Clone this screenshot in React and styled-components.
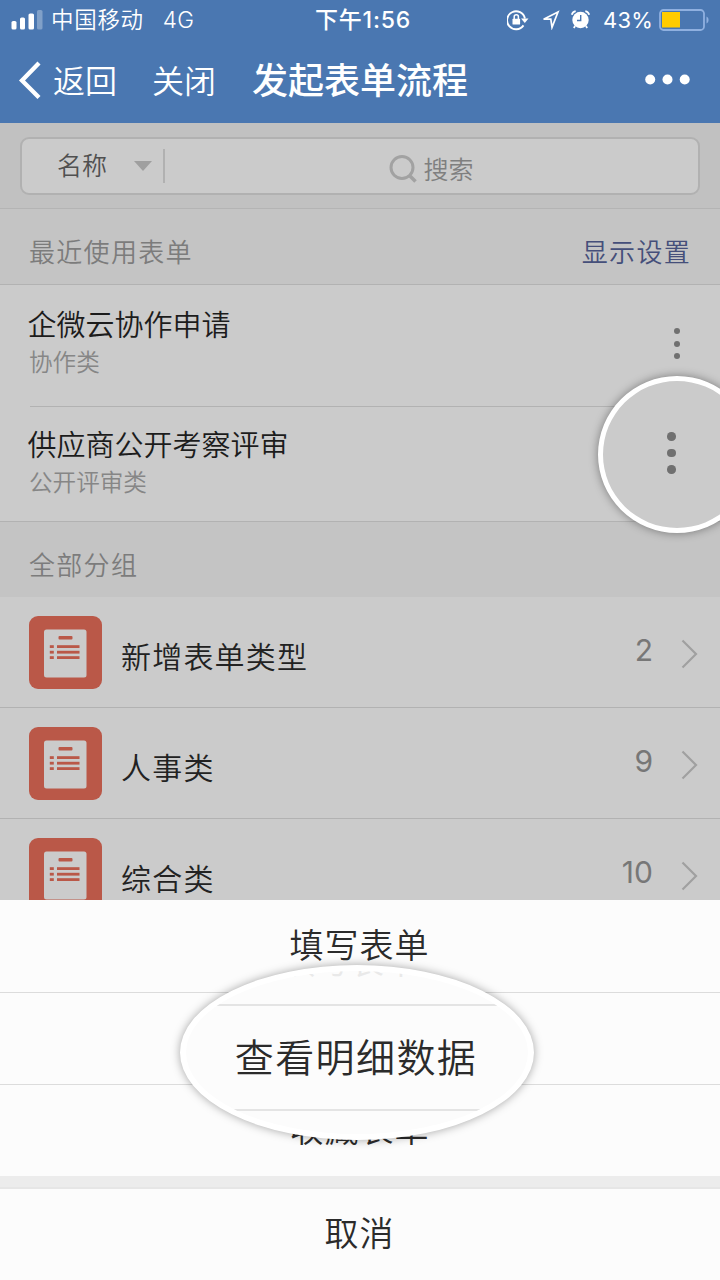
import React from "react";
import styled, { createGlobalStyle } from "styled-components";

const GlobalStyle = createGlobalStyle`
  * {
    box-sizing: border-box;
  }
  body {
    margin: 0;
    font-family: Inter, "Noto Sans CJK SC", sans-serif;
    font-weight: 350;
    background: #cbcbcb;
  }
`;

const Screen = styled.div`
  position: relative;
  display: flex;
  flex-direction: column;
  width: 720px;
  height: 1280px;
  overflow: hidden;
  background: #cbcbcb;
`;

const Header = styled.header`
  height: 123px;
  flex: none;
  background: #4a77b1;
  color: #fff;
`;

const StatusBar = styled.div`
  display: grid;
  grid-template-columns: 1fr auto 1fr;
  align-items: center;
  height: 40px;
  padding: 0 11px;
  font-size: 22px;
  line-height: 40px;
`;

const StatusSide = styled.div`
  display: flex;
  align-items: center;
  justify-content: ${(props) => (props.$end ? "flex-end" : "flex-start")};
  svg {
    flex: none;
  }
`;

const Carrier = styled.span`
  margin-left: 8px;
  font-size: 22.5px;
  letter-spacing: 0.7px;
`;

const Network = styled.span`
  margin-left: 19px;
  font-size: 22.5px;
  letter-spacing: 0.3px;
`;

const Clock = styled.span`
  padding-left: 6px;
  font-size: 23px;
  font-weight: 500;
  letter-spacing: 0.8px;
`;

const StatusIcons = styled.div`
  display: flex;
  align-items: center;
  gap: 10px;
  padding-bottom: 1px;
`;

const Percent = styled.span`
  margin: 0 6px 0 12px;
  font-size: 22px;
  font-weight: 400;
  letter-spacing: 0.2px;
`;

const NavBar = styled.nav`
  display: flex;
  align-items: center;
  height: 80px;
  padding: 0 29px 0 17px;
`;

const NavLink = styled.span`
  margin-left: ${(props) => props.$gap}px;
  padding-top: 3px;
  font-size: 32px;
  line-height: 80px;
`;

const NavTitle = styled.h1`
  flex: 1;
  margin: 0 0 0 36px;
  padding-top: 2px;
  font-size: 36px;
  font-weight: 500;
  line-height: 80px;
`;

const SearchArea = styled.div`
  flex: none;
  height: 86px;
  padding: 14px 20px 0;
  background: #c1c1c1;
  border-bottom: 1px solid #b4b4b4;
`;

const SearchBox = styled.div`
  display: flex;
  align-items: center;
  height: 58px;
  border: 2px solid #b1b1b1;
  border-radius: 9px;
  background: #cbcbcb;
`;

const Filter = styled.div`
  display: flex;
  align-items: center;
  justify-content: space-between;
  width: 143px;
  height: 34px;
  padding: 0 11px 0 35px;
  border-right: 2px solid #b1b1b1;
  color: #505050;
  font-size: 25px;
  line-height: 34px;
`;

const SearchHint = styled.div`
  flex: 1;
  display: flex;
  align-items: center;
  justify-content: center;
  gap: 6px;
  padding: 7px 0 0;
  color: #7f7f7f;
  font-size: 25px;
  line-height: 36px;
  svg {
    margin-bottom: 2px;
  }
`;

const SectionHead = styled.div`
  flex: none;
  display: flex;
  justify-content: space-between;
  height: ${(props) => props.$height}px;
  padding: 7px 29px 0;
  background: #c4c4c4;
  border-bottom: ${(props) => (props.$line ? "1px solid #b2b2b2" : "none")};
  color: #7c7c7c;
  font-size: 26px;
  letter-spacing: 1.3px;
  line-height: 74px;
`;

const SettingsLink = styled.a`
  color: #454f7a;
`;

const FormRow = styled.div`
  flex: none;
  display: flex;
  justify-content: space-between;
  height: ${(props) => props.$height}px;
  margin-left: ${(props) => (props.$inset ? 30 : 0)}px;
  padding: ${(props) => (props.$inset ? "21px 0 0 0" : "19px 0 0 30px")};
  border-bottom: 1px solid #b2b2b2;
`;

const FormName = styled.div`
  margin-left: -2.5px;
  color: #1c1c1c;
  font-size: 29px;
  line-height: 40px;
`;

const FormKind = styled.div`
  margin-left: -1px;
  color: #868686;
  font-size: 23.6px;
  line-height: 34px;
`;

const MoreButton = styled.div`
  display: flex;
  flex-direction: column;
  align-items: center;
  gap: ${(props) => (props.$large ? 8 : 6.5)}px;
  span {
    width: ${(props) => (props.$large ? 8.5 : 6)}px;
    height: ${(props) => (props.$large ? 8.5 : 6)}px;
    border-radius: 50%;
    background: #707070;
  }
`;

const RowMore = styled(MoreButton)`
  margin: 22px 40px 0 0;
`;

const GroupRow = styled.div`
  flex: none;
  display: flex;
  align-items: flex-start;
  height: 111.2px;
  padding: 19px 22px 0 29px;
  border-bottom: 1px solid #b2b2b2;
`;

const GroupName = styled.div`
  flex: 1;
  margin-left: 19px;
  padding-top: 19px;
  color: #222;
  font-size: 30px;
  letter-spacing: 1.2px;
  line-height: 44px;
`;

const GroupCount = styled.div`
  margin-right: 28px;
  padding-top: 12px;
  color: #777;
  font-size: 30px;
  font-weight: 400;
  line-height: 44px;
`;

const Chevron = styled.svg`
  margin-top: 23px;
`;

const Sheet = styled.div`
  position: absolute;
  left: 0;
  right: 0;
  bottom: 0;
  height: 380px;
  background: #fcfcfc;
  color: #2b2b2b;
`;

const SheetItem = styled.div`
  height: ${(props) => props.$height}px;
  padding-right: 1px;
  border-bottom: ${(props) => (props.$last ? "none" : "1px solid #dcdcdc")};
  font-size: 34px;
  letter-spacing: 1px;
  line-height: ${(props) => props.$height - 1}px;
  text-align: center;
`;

const SheetGap = styled.div`
  height: 13px;
  background: #ececec;
  border-bottom: 2px solid #e6e6e6;
`;

const RoundLens = styled.div`
  position: absolute;
  top: 376px;
  left: 598px;
  display: flex;
  align-items: center;
  justify-content: center;
  width: 158px;
  height: 157px;
  padding: 0 11px 3px 0;
  border: 5px solid #fff;
  border-radius: 50%;
  background: #cbcbcb;
  box-shadow: 0 0 10px rgba(0, 0, 0, 0.4);
`;

const OvalLens = styled.div`
  position: absolute;
  top: 965px;
  left: 180px;
  width: 354px;
  height: 175px;
  overflow: hidden;
  border: 6px solid #fff;
  border-radius: 50%;
  background: #fcfcfc;
  box-shadow: 0 0 10px rgba(0, 0, 0, 0.35);
  color: #2b2b2b;
  text-align: center;
`;

/* only the feet of the row above reach into the lens */
const LensPrevious = styled.div`
  display: flex;
  align-items: flex-end;
  justify-content: center;
  height: 35px;
  padding: 0 14px 23px 0;
  border-bottom: 2px solid #e4e4e4;
  color: #e9e9e9;
  font-size: 34px;
  line-height: 38px;
`;

const LensItem = styled.div`
  height: 105px;
  padding: 2px 2px 0 0;
  border-bottom: 2px solid #e4e4e4;
  font-size: 39px;
  letter-spacing: 1.4px;
  line-height: 100px;
`;

const forms = [
  { name: "企微云协作申请", kind: "协作类", height: 122 },
  { name: "供应商公开考察评审", kind: "公开评审类", height: 115 },
];

const groups = [
  { name: "新增表单类型", count: 2 },
  { name: "人事类", count: 9 },
  { name: "综合类", count: 10 },
];

function SignalIcon() {
  return (
    <svg width="32" height="20" viewBox="0 0 32 20" fill="#fff">
      <rect x="0.5" y="11" width="5" height="8.5" rx="1.6" />
      <rect x="9" y="7.5" width="5" height="12" rx="1.6" />
      <rect x="17.5" y="3.5" width="5.5" height="16" rx="1.6" />
      <rect x="26" y="0" width="5.5" height="19.5" rx="1.6" opacity="0.3" />
    </svg>
  );
}

function RotationLockIcon() {
  return (
    <svg width="24" height="22" viewBox="0 0 24 22" fill="none" stroke="#fff">
      <path d="M16.5 16.4A9 9 0 1 1 17.9 9.5" strokeWidth="1.9" />
      <path d="M14 9.5h7.500l-3.700 4.500z" fill="#fff" stroke="none" />
      <rect x="5.5" y="9.800" width="7.600" height="5.800" rx="0.6" fill="#fff" stroke="none" />
      <path d="M7.200 10V7.800a2.100 2.100 0 0 1 4.200 0V10" strokeWidth="1.5" />
    </svg>
  );
}

function LocationIcon() {
  return (
    <svg width="20" height="20" viewBox="0 0 20 20" fill="none">
      <path d="M17 2 2.600 9.200h7.200l1.200 8.200z" stroke="#fff" strokeWidth="1.7" />
    </svg>
  );
}

function AlarmIcon() {
  return (
    <svg width="20" height="20" viewBox="0 0 20 20" fill="none">
      <circle cx="9.500" cy="10" r="8.200" fill="#fff" />
      <path d="M9.700 5v5.500H6" stroke="#4a77b1" strokeWidth="1.4" />
      <path
        d="M.8 4.800C1.300 3 2.700 1.600 4.700 1.200M18.200 4.800c-.5-1.800-1.900-3.200-3.900-3.600M4.100 16l-1.300 2M14.900 16l1.300 2"
        stroke="#fff"
        strokeWidth="1.8"
      />
    </svg>
  );
}

function BatteryIcon() {
  return (
    <svg width="50" height="22" viewBox="0 0 50 22" fill="none">
      <rect x="1" y="1" width="44" height="20" rx="3.5" stroke="#8fb0e0" strokeWidth="1.8" />
      <rect x="3" y="3" width="18" height="15.5" fill="#fc0" />
      <path d="M47.500 7.500c1.600.8 2 2 2 3.500s-.4 2.700-2 3.500z" fill="#8fb0e0" />
    </svg>
  );
}

function FormIcon() {
  return (
    <svg width="73" height="73" viewBox="0 0 73 73">
      <rect width="73" height="73" rx="9" fill="#ba5848" />
      <rect x="15" y="13.5" width="42.5" height="48" rx="2.5" fill="#cbcbcb" />
      <g fill="#ba5848">
        <rect x="29.5" y="20" width="14" height="3.6" rx="1" />
        {[29.2, 34.8, 40.2].map((y) => (
          <React.Fragment key={y}>
            <rect x="20.8" y={y} width="4" height="2.8" />
            <rect x="28" y={y} width="22.5" height="2.8" />
          </React.Fragment>
        ))}
      </g>
    </svg>
  );
}

export default function App() {
  return (
    <>
      <GlobalStyle />
      <Screen>
        <Header>
          <StatusBar>
            <StatusSide>
              <SignalIcon />
              <Carrier>中国移动</Carrier>
              <Network>4G</Network>
            </StatusSide>
            <Clock>下午1:56</Clock>
            <StatusSide $end>
              <StatusIcons>
                <RotationLockIcon />
                <LocationIcon />
                <AlarmIcon />
              </StatusIcons>
              <Percent>43%</Percent>
              <BatteryIcon />
            </StatusSide>
          </StatusBar>
          <NavBar>
            <svg width="24" height="40" viewBox="0 0 24 40" fill="none">
              <path d="M22 3 5 20.500l17 17" stroke="#fff" strokeWidth="4.3" />
            </svg>
            <NavLink $gap={12}>返回</NavLink>
            <NavLink $gap={35}>关闭</NavLink>
            <NavTitle>发起表单流程</NavTitle>
            <svg width="46" height="12" viewBox="0 0 46 12" fill="#fff">
              <circle cx="5.2" cy="5.5" r="5" />
              <circle cx="22.5" cy="5.5" r="5" />
              <circle cx="39.7" cy="5.5" r="5" />
            </svg>
          </NavBar>
        </Header>

        <SearchArea>
          <SearchBox>
            <Filter>
              名称
              <svg width="18" height="10" viewBox="0 0 18 10">
                <path d="M0 0h18L9 10z" fill="#9f9f9f" />
              </svg>
            </Filter>
            <SearchHint>
              <svg width="28" height="28" viewBox="0 0 28 28" fill="none" stroke="#a2a2a2">
                <circle cx="13" cy="12.5" r="11" strokeWidth="3" />
                <path d="m20.500 20.500 6 6" strokeWidth="3.5" />
              </svg>
              搜索
            </SearchHint>
          </SearchBox>
        </SearchArea>

        <SectionHead $height={76} $line>
          <span>最近使用表单</span>
          <SettingsLink>显示设置</SettingsLink>
        </SectionHead>
        {forms.map((form, i) => (
          <FormRow key={form.name} $height={form.height} $inset={i === 0}>
            <div>
              <FormName>{form.name}</FormName>
              <FormKind>{form.kind}</FormKind>
            </div>
            {i === 0 && (
              <RowMore>
                <span />
                <span />
                <span />
              </RowMore>
            )}
          </FormRow>
        ))}

        <SectionHead $height={75}>
          <span>全部分组</span>
        </SectionHead>
        {groups.map((group) => (
          <GroupRow key={group.name}>
            <FormIcon />
            <GroupName>{group.name}</GroupName>
            <GroupCount>{group.count}</GroupCount>
            <Chevron width="17" height="30" viewBox="0 0 17 30" fill="none">
              <path d="M1.500 1.500 15 15 1.500 28.500" stroke="#a0a0a0" strokeWidth="2.2" />
            </Chevron>
          </GroupRow>
        ))}

        <Sheet>
          <SheetItem $height={93}>填写表单</SheetItem>
          <SheetItem $height={92} />
          <SheetItem $height={91} $last>
            收藏表单
          </SheetItem>
          <SheetGap />
          <SheetItem $height={91} $last>
            取消
          </SheetItem>
        </Sheet>

        <RoundLens>
          <MoreButton $large>
            <span />
            <span />
            <span />
          </MoreButton>
        </RoundLens>
        <OvalLens>
          <LensPrevious>填写表单</LensPrevious>
          <LensItem>查看明细数据</LensItem>
        </OvalLens>
      </Screen>
    </>
  );
}
